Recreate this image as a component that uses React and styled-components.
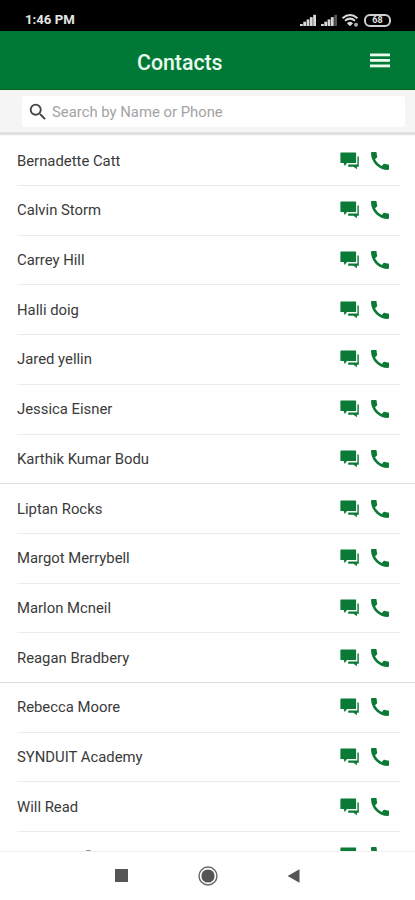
import React from "react";
import styled, { createGlobalStyle } from "styled-components";
import { MdCall, MdSearch } from "react-icons/md";

const contacts = [
  { name: "Bernadette Catt" },
  { name: "Calvin Storm" },
  { name: "Carrey Hill" },
  { name: "Halli doig" },
  { name: "Jared yellin" },
  { name: "Jessica Eisner" },
  { name: "Karthik Kumar Bodu", last: true },
  { name: "Liptan Rocks" },
  { name: "Margot Merrybell" },
  { name: "Marlon Mcneil" },
  { name: "Reagan Bradbery", last: true },
  { name: "Rebecca Moore" },
  { name: "SYNDUIT Academy" },
  { name: "Will Read" },
];

const SignalIcon = ({ weak }) => (
  <svg width="18" height="13" viewBox="0 0 18 13">
    {[0, 1, 2, 3, 4].map((bar) => (
      <rect
        key={bar}
        x={1 + bar * 3.3}
        y={10 - bar * 2.3}
        width="2.8"
        height={2 + bar * 2.3}
        fill={weak && bar > 3 ? "#555" : "#d8d8d8"}
      />
    ))}
  </svg>
);

const WifiIcon = () => (
  <svg width="19" height="15" viewBox="0 0 19 15" fill="none" stroke="#d8d8d8">
    <path d="M1.5 5.2Q9 -1.2 16.5 5.2" strokeWidth="2" />
    <path d="M4 7.8Q9 3.5 14 7.8" strokeWidth="2" />
    <path d="M6.5 10.2Q9 8 11.5 10.2L9 12.8z" fill="#d8d8d8" />
    <circle cx="15" cy="11.8" r="2" fill="#aaa" stroke="none" />
  </svg>
);

const MenuIcon = () => (
  <svg width="20" height="15" viewBox="0 0 20 15" fill="currentColor">
    <rect y="0.5" width="20" height="2.8" />
    <rect y="6" width="20" height="2.8" />
    <rect y="11.5" width="20" height="2.8" />
  </svg>
);

const ChatIcon = () => (
  <svg width="20" height="18" viewBox="0 0 20 18" fill="#0a7a36">
    <path d="M1 .6h14.5q.6 0 .6.6v9.3q0 .6-.6.6H7L4.6 14 3.7 11.1H1q-.6 0-.6-.6V1.2Q.4.6 1 .6z" />
    <path d="M17.4 4.6h1.4v10.1h-1.9v2.6l-3.4-2.6H8.2v-2.1h9.2z" />
  </svg>
);

const ContactRow = ({ name, last, children }) => (
  <Row $last={last}>
    {name ? <Name>{name}</Name> : children}
    <Actions>
      <ChatIcon />
      <MdCall size={24} />
    </Actions>
  </Row>
);

const App = () => {
  return (
    <Screen>
      <GlobalStyle />
      <StatusBar>
        <Time>1:46 PM</Time>
        <StatusIcons>
          <SignalIcon />
          <SignalIcon weak />
          <WifiIcon />
          <Battery>68</Battery>
        </StatusIcons>
      </StatusBar>
      <Header>
        <Title>Contacts</Title>
        <MenuIcon />
      </Header>
      <SearchBar>
        <SearchBox>
          <MdSearch size={22} />
          <span>Search by Name or Phone</span>
        </SearchBox>
      </SearchBar>
      <List>
        {contacts.map((contact) => (
          <ContactRow key={contact.name} {...contact} />
        ))}
        {/* next row, only its top edge shows above the nav bar */}
        <ContactRow>
          <Peek />
        </ContactRow>
      </List>
      <NavBar>
        <svg width="13" height="13">
          <rect width="13" height="13" fill="#555" />
        </svg>
        <svg width="20" height="20" viewBox="0 0 20 20">
          <circle cx="10" cy="10" r="9" fill="none" stroke="#666" strokeWidth="1.4" />
          <circle cx="10" cy="10" r="6.6" fill="#555" />
        </svg>
        <svg width="13" height="14" viewBox="0 0 13 14">
          <path d="M11.5 .2v13.6L-.5 7z" fill="#555" />
        </svg>
      </NavBar>
    </Screen>
  );
};

const GlobalStyle = createGlobalStyle`
  body {
    margin: 0;
    background: #fff;
    overflow: hidden;
  }
  * {
    box-sizing: border-box;
  }
  svg {
    display: block;
    flex: none;
  }
`;

const Screen = styled.div`
  width: 415px;
  height: 900px;
  display: flex;
  flex-direction: column;
  font-family: Roboto, sans-serif;
  overflow: hidden;
`;

const StatusBar = styled.div`
  flex: none;
  height: 31px;
  padding: 8px 24px 0 25px;
  display: flex;
  justify-content: space-between;
  background: #000;
`;

const Time = styled.span`
  font-size: 13.2px;
  font-weight: 700;
  line-height: 24px;
  color: #e6e6e6;
`;

const StatusIcons = styled.div`
  height: 24px;
  display: flex;
  align-items: center;
  gap: 3px;
`;

const Battery = styled.span`
  width: 27px;
  height: 13px;
  margin-left: 1px;
  border: 2px solid #d0d0d0;
  border-radius: 6px;
  color: #e0e0e0;
  font-size: 9px;
  font-weight: 700;
  line-height: 9px;
  text-align: center;
`;

const Header = styled.header`
  flex: none;
  height: 59px;
  padding: 1px 25px 0 137px;
  display: flex;
  align-items: center;
  justify-content: space-between;
  background: #007836;
  border-bottom: 1px solid #006622;
  color: #e9fbee;
`;

const Title = styled.h1`
  margin: 5px 0 0;
  font-size: 21.3px;
  font-weight: 500;
  line-height: 28px;
`;

const SearchBar = styled.div`
  flex: none;
  height: 46.4px;
  padding: 6px 10px 0 22px;
  background: linear-gradient(#f5f5f5 0 42px, #d6d6d6 43px, #dedede 44px, #fff 46px);
`;

const SearchBox = styled.div`
  height: 31px;
  padding-left: 5px;
  display: flex;
  align-items: center;
  gap: 3px;
  background: #fff;
  border-radius: 3px;
  color: #444;

  span {
    font-size: 14.85px;
    color: #a3a3a3;
  }
`;

const List = styled.div`
  flex: 1;
  min-height: 0;
  overflow: hidden;
`;

const Row = styled.div`
  height: 49.7px;
  margin-left: ${(props) => (props.$last ? 0 : 17)}px;
  margin-right: ${(props) => (props.$last ? 0 : 15)}px;
  padding-left: ${(props) => (props.$last ? 17 : 0)}px;
  padding-right: ${(props) => (props.$last ? 23 : 8)}px;
  display: flex;
  align-items: center;
  justify-content: space-between;
  border-bottom: 1px solid ${(props) => (props.$last ? "#dedede" : "#ebebeb")};
`;

const Name = styled.span`
  font-size: 14.85px;
  color: #3a3a3a;
`;

const Peek = styled.span`
  align-self: flex-start;
  width: 5px;
  height: 1px;
  margin: 18px 0 0 69px;
  border-radius: 1px;
  background: #999;
`;

const Actions = styled.div`
  display: flex;
  align-items: center;
  gap: 8px;
  color: #0a7a36;
`;

const NavBar = styled.nav`
  flex: none;
  height: 49.5px;
  display: flex;
  align-items: center;
  justify-content: center;
  gap: 70px;
  background: #fff;
  border-top: 1px solid #f0f0f0;
`;

export default App;
